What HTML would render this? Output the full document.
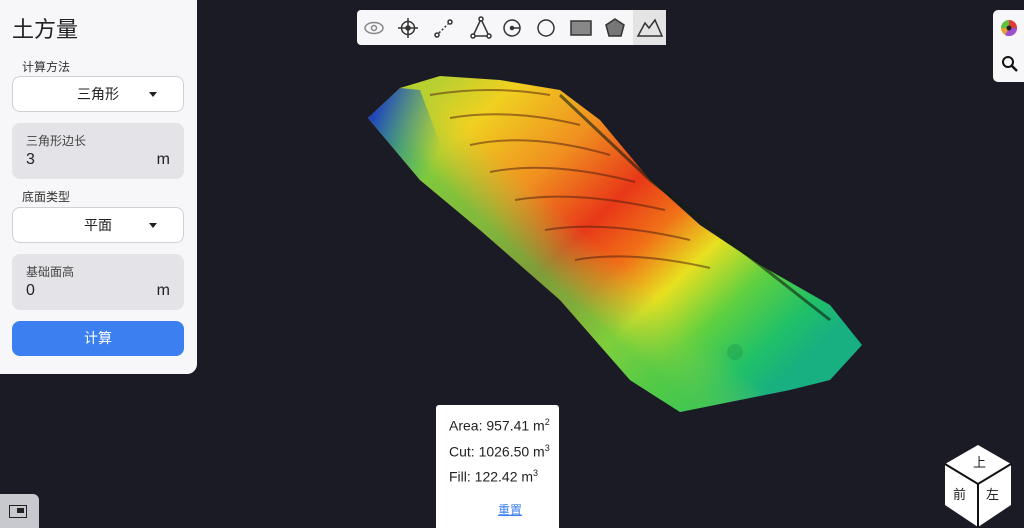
<!DOCTYPE html>
<html><head><meta charset="utf-8"><style>
body{margin:0;width:1024px;height:528px;background:#1a1b25;overflow:hidden;position:relative;font-family:"Liberation Sans","Noto Sans CJK SC",sans-serif}
.panel{position:absolute;left:0;top:0;width:197px;height:374px;background:#f7f7f9;border-radius:0 0 10px 0}
.title{position:absolute;left:12px;top:12px;font-size:22px;color:#222}
.lbl{position:absolute;left:22px;font-size:12px;color:#333}
.sel{position:absolute;left:12px;width:170px;height:34px;border:1px solid #d0d0d4;border-radius:8px;background:#fff;font-size:14px;color:#222;line-height:34px;text-align:center}
.sel:after{content:"";position:absolute;right:26px;top:15px;border:4px solid transparent;border-top:5px solid #222}
.inp{position:absolute;left:12px;width:172px;height:56px;background:#e4e4e8;border-radius:8px}
.inp .l{position:absolute;left:14px;top:9px;font-size:12px;color:#444}
.inp .v{position:absolute;left:14px;top:28px;font-size:16px;color:#222}
.inp .u{position:absolute;right:14px;top:28px;font-size:16px;color:#222}
.btn{position:absolute;left:12px;top:321px;width:172px;height:35px;background:#3b7ff0;border-radius:8px;color:#fff;font-size:14px;text-align:center;line-height:35px}
.tb{position:absolute;left:357px;top:10px;width:309px;height:35px;background:#f7f7f9;border-radius:4px}
.tb svg{position:absolute;top:0}
.rt{position:absolute;left:993px;top:10px;width:31px;height:72px;background:#f7f7f9;border-radius:5px 0 0 5px}
.res{position:absolute;left:436px;top:405px;width:123px;height:123px;background:#fff;border-radius:3px 3px 0 0;font-size:14px;color:#222}
.res div{position:absolute;left:13px}
sup{font-size:9px}
</style></head><body>
<svg width="1024" height="528" style="position:absolute;left:0;top:0">
<defs>
<linearGradient id="g" x1="440" y1="80" x2="750" y2="410" gradientUnits="userSpaceOnUse">
<stop offset="0" stop-color="#b8d030"/>
<stop offset="0.12" stop-color="#f0d020"/>
<stop offset="0.3" stop-color="#f09020"/>
<stop offset="0.46" stop-color="#e83818"/>
<stop offset="0.57" stop-color="#f07018"/>
<stop offset="0.68" stop-color="#e8e020"/>
<stop offset="0.8" stop-color="#60d040"/>
<stop offset="0.92" stop-color="#20c068"/>
<stop offset="1" stop-color="#18b080"/>
</linearGradient>
<linearGradient id="e" x1="560" y1="290" x2="640" y2="200" gradientUnits="userSpaceOnUse">
<stop offset="0" stop-color="#50c848" stop-opacity="0.7"/><stop offset="0.5" stop-color="#a0d040" stop-opacity="0"/>
</linearGradient>
<linearGradient id="b" x1="370" y1="120" x2="440" y2="150" gradientUnits="userSpaceOnUse">
<stop offset="0" stop-color="#2040c0"/><stop offset="1" stop-color="#20a0a0" stop-opacity="0"/>
</linearGradient>
</defs>
<g>
<polygon fill="url(#g)" points="368,118 400,88 440,76 500,80 560,90 600,120 650,180 700,225 760,265 830,305 862,345 830,380 790,390 680,412 630,380 560,300 480,230 420,180"/>
<polygon fill="url(#e)" points="368,118 400,88 440,76 500,80 560,90 600,120 650,180 700,225 760,265 830,305 862,345 830,380 790,390 680,412 630,380 560,300 480,230 420,180"/>
<polygon fill="url(#b)" points="368,118 400,88 420,90 450,170 420,180"/>
</g>
<g stroke="#4a1a10" stroke-opacity="0.5" stroke-width="2" fill="none">
<path d="M430,95 Q490,85 550,95"/><path d="M450,118 Q510,108 580,125"/><path d="M470,145 Q530,132 610,155"/><path d="M490,172 Q550,160 635,182"/><path d="M515,200 Q575,190 665,210"/><path d="M545,230 Q605,220 690,240"/><path d="M575,260 Q630,250 710,268"/>
<path d="M560,95 L650,180 L760,265 L830,320" stroke="#102010" stroke-opacity="0.6" stroke-width="3"/>
</g>
<circle cx="735" cy="352" r="8" fill="#1fa050" opacity="0.5"/>
</svg>
<div class="panel">
<div class="title">土方量</div>
<div class="lbl" style="top:58px">计算方法</div>
<div class="sel" style="top:76px">三角形</div>
<div class="inp" style="top:123px"><div class="l">三角形边长</div><div class="v">3</div><div class="u">m</div></div>
<div class="lbl" style="top:188px">底面类型</div>
<div class="sel" style="top:207px">平面</div>
<div class="inp" style="top:254px"><div class="l">基础面高</div><div class="v">0</div><div class="u">m</div></div>
<div class="btn">计算</div>
</div>
<div class="tb">
<svg width="309" height="35" fill="none" stroke="#333" stroke-width="1.5">
<ellipse cx="17" cy="18" rx="9" ry="5.5" stroke="#888"/><circle cx="17" cy="18" r="2.5" stroke="#888"/>
<circle cx="51" cy="18" r="6.5"/><path d="M51,8V28M41,18H61"/><circle cx="51" cy="18" r="2" fill="#333"/>
<circle cx="80" cy="25" r="2"/><circle cx="93" cy="12" r="2"/><path d="M82,23L91,14" stroke-dasharray="2 2"/>
<path d="M124,9L116,26H132Z"/><circle cx="124" cy="9" r="2" fill="#fff"/><circle cx="116" cy="26" r="2" fill="#fff"/><circle cx="132" cy="26" r="2" fill="#fff"/>
<circle cx="155" cy="18" r="8"/><path d="M155,18H163"/><circle cx="155" cy="18" r="1.5" fill="#333"/>
<circle cx="189" cy="18" r="8"/>
<rect x="214" y="11" width="20" height="14" fill="#888"/>
<path d="M258,9L267,15L264,26H252L249,15Z" fill="#777"/>
<rect x="276" y="0" width="33" height="35" fill="#e4e4e4" stroke="none"/>
<path d="M281,26L288,13L292,18L298,10L305,26Z"/>
</svg>
</div>
<div class="rt">
<svg width="31" height="72"><circle cx="16" cy="18" r="8" fill="#e7a030"/><path d="M16,18L16,10A8,8 0 0 1 24,18Z" fill="#e23b3b"/><path d="M16,18L24,18A8,8 0 0 1 12,25Z" fill="#9b50d0"/><path d="M16,18L8,18A8,8 0 0 1 16,10Z" fill="#60c040"/><circle cx="16" cy="18" r="2.5" fill="#222"/>
<circle cx="15" cy="52" r="5" fill="none" stroke="#111" stroke-width="2"/><path d="M19,56L24,61" stroke="#111" stroke-width="2.5"/></svg>
</div>
<div class="res">
<div style="top:12px">Area: 957.41 m<sup>2</sup></div>
<div style="top:38px">Cut: 1026.50 m<sup>3</sup></div>
<div style="top:63px">Fill: 122.42 m<sup>3</sup></div>
<div style="top:96px;left:62px;font-size:12px;color:#3b7ff0;text-decoration:underline">重置</div>
</div>
<svg width="70" height="84" style="position:absolute;left:943px;top:444px">
<path d="M35,1L68,20V61L35,83L2,61V20Z" fill="#fff"/>
<path d="M2,20L35,40L68,20M35,40V83" stroke="#111" stroke-width="2" fill="none"/>
<text x="30" y="23" font-size="13" fill="#222" font-family="Noto Sans CJK SC">上</text>
<text x="10" y="55" font-size="13" fill="#222" font-family="Noto Sans CJK SC">前</text>
<text x="43" y="55" font-size="13" fill="#222" font-family="Noto Sans CJK SC">左</text>
</svg>
<div style="position:absolute;left:0;top:494px;width:39px;height:34px;background:#c8c9cf;border-radius:0 6px 0 0">
<div style="position:absolute;left:9px;top:11px;width:16px;height:11px;border:1.5px solid #222"></div>
<div style="position:absolute;left:17px;top:14px;width:7px;height:5px;background:#222"></div>
</div>
</body></html>
